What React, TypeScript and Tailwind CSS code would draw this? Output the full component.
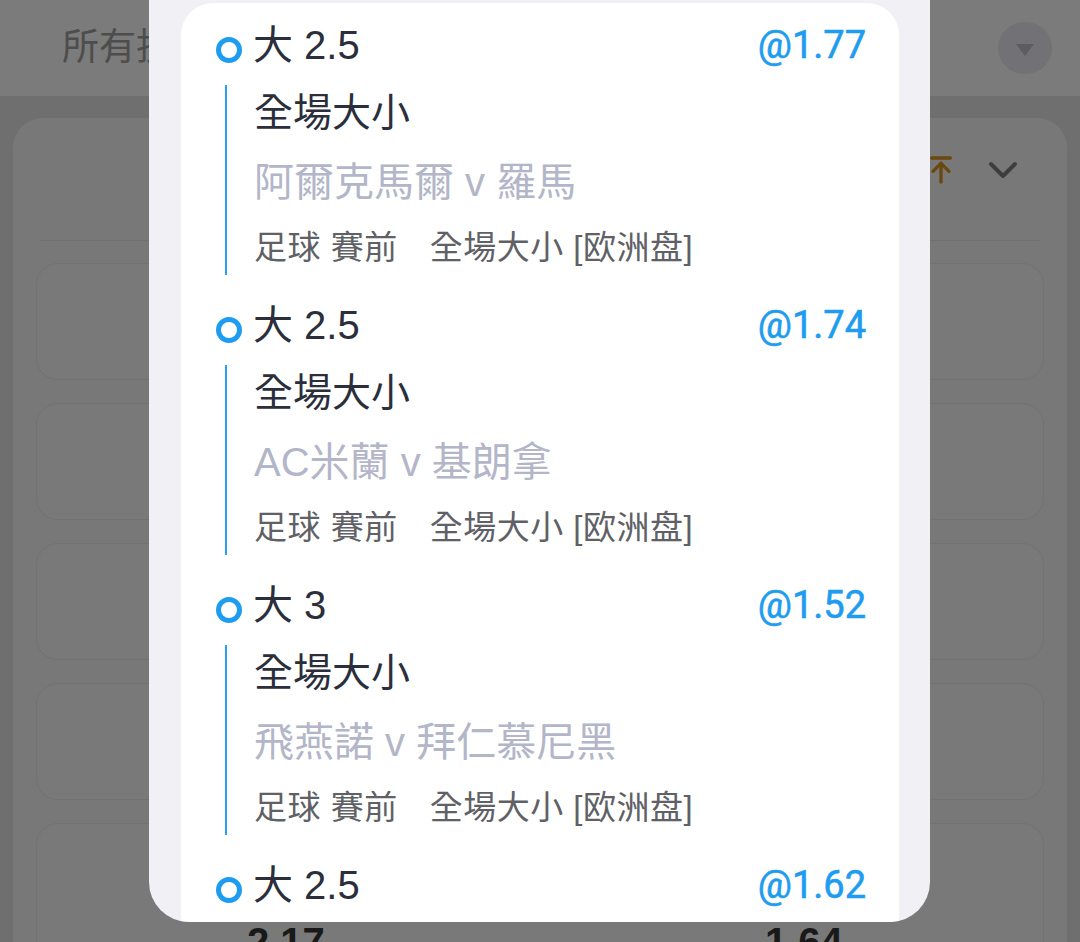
import { ArrowUpToLine, ChevronDown } from "lucide-react";

const BETS = [
  { line: "大 2.5", odds: "@1.77", market: "全場大小", match: "阿爾克馬爾 v 羅馬" },
  { line: "大 2.5", odds: "@1.74", market: "全場大小", match: "AC米蘭 v 基朗拿" },
  { line: "大 3", odds: "@1.52", market: "全場大小", match: "飛燕諾 v 拜仁慕尼黑" },
  { line: "大 2.5", odds: "@1.62", market: "全場大小", match: "費倫天拿 v 布拉格斯拉維亞" },
];

function BetItem({ bet }: { bet: (typeof BETS)[number] }) {
  return (
    <div className="h-[280px]">
      {/* Selection + odds */}
      <div className="flex h-[80px] items-center justify-between">
        <div className="flex items-center">
          <svg className="mt-[10px] shrink-0" width="28" height="28" viewBox="0 0 28 28">
            <circle cx="14" cy="14" r="10.5" fill="none" stroke="#1e9cf0" strokeWidth="5" />
          </svg>
          <span className="ml-[10px] text-[40px] leading-none text-[#2b2e3b]">{bet.line}</span>
        </div>
        <span className="font-['Roboto',sans-serif] text-[38px] leading-none text-[#1e9cf0] [-webkit-text-stroke:0.6px_#1e9cf0]">
          {bet.odds}
        </span>
      </div>

      {/* Details with timeline bar */}
      <div className="ml-[10px] h-[190px] border-l-2 border-[#2a9df4] pl-[27px]">
        <div className="h-[56px] text-[39px] leading-[56px] text-[#2b2e3b]">{bet.market}</div>
        <div className="mt-[13px] h-[56px] text-[40px] leading-[56px] text-[#b3b6c8]">{bet.match}</div>
        <div className="mt-[14px] flex h-[48px] items-center text-[33px] leading-[48px] text-[#5f6166]">
          <span className="tracking-[0.5px]">足球 賽前</span>
          <span className="ml-[32px] tracking-[0.5px]">全場大小 [欧洲盘]</span>
        </div>
      </div>
    </div>
  );
}

export default function App() {
  return (
    <div className="relative h-[942px] w-[1080px] overflow-hidden bg-[#dedede] font-['Liberation_Sans','Noto_Sans_CJK_TC',sans-serif]">
      {/* Page behind the sheet */}
      <header className="flex h-[96px] items-center justify-between bg-[#f6f6f6] pl-[62px] pr-[28px]">
        <span className="text-[37px] text-[#9a9a9a]">所有投注</span>
        <span className="flex h-[52px] w-[54px] items-center justify-center rounded-full bg-[#e4e4e8]">
          <span className="mt-[4px] h-0 w-0 border-x-[9px] border-t-[12px] border-x-transparent border-t-[#b8b8c6]" />
        </span>
      </header>

      <div className="mx-[13px] mt-[22px] rounded-t-[30px] bg-[#f0f0f0]">
        <div className="flex h-[122px] items-start justify-end gap-[22px] pr-[40px] pt-[28px]">
          <ArrowUpToLine className="mt-[8px] h-[32px] w-[32px] text-[#d4901c]" strokeWidth={2.5} />
          <ChevronDown className="h-[48px] w-[48px] text-[#7a7a7a]" strokeWidth={2} />
        </div>
        <div className="mx-[27px] h-px bg-[#e0e0e0]" />
        <div className="flex flex-col gap-[23px] px-[23px] pt-[22px]">
          {[0, 1, 2, 3].map((i) => (
            <div key={i} className="h-[117px] rounded-[22px] border border-[#e4e4e4] bg-[#f3f3f3]" />
          ))}
          <div className="flex h-[140px] rounded-[22px] border border-[#e4e4e4] bg-[#f3f3f3] pt-[98px]">
            <div className="w-1/2 pl-[210px] text-[40px] font-bold leading-none text-[#333]">2.17</div>
            <div className="w-1/2 pl-[225px] text-[40px] font-bold leading-none text-[#333]">1.64</div>
          </div>
        </div>
      </div>

      {/* Dim overlay */}
      <div className="absolute inset-0 bg-black/50" />

      {/* Bet slip sheet */}
      <div className="absolute left-[149px] top-0 h-[922px] w-[781px] overflow-hidden rounded-b-[40px] bg-[#f0f0f5] pl-[32px] pr-[31px]">
        <div className="mt-[3px] rounded-t-[32px] bg-white pl-[34px] pr-[33px] pt-[2px]">
          {BETS.map((bet, i) => (
            <BetItem key={i} bet={bet} />
          ))}
        </div>
      </div>
    </div>
  );
}
